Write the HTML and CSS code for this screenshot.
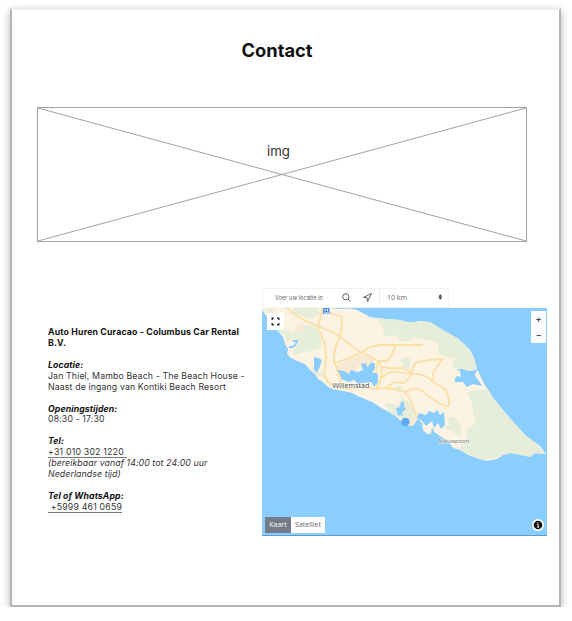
FILE: index.html
```html
<!DOCTYPE html>
<html lang="nl">
<head>
<meta charset="utf-8">
<title>Contact</title>
<link rel="stylesheet" href="styles.css">
</head>
<body>
<main class="page">
  <h1 class="title">Contact</h1>
  <div class="placeholder">
    <svg class="cross" viewBox="0 0 490 135" preserveAspectRatio="none"><path d="M0 0L490 135M490 0L0 135"/></svg>
    <span class="placeholder-label">img</span>
  </div>
  <div class="columns">
    <address class="details">
      <p class="company">Auto Huren Curacao - Columbus Car Rental<br>B.V.</p>
      <p><strong>Locatie:</strong><br>Jan Thiel, Mambo Beach - The Beach House -<br>Naast de ingang van Kontiki Beach Resort</p>
      <p><strong>Openingstijden:</strong><br>08:30 - 17:30</p>
      <p><strong>Tel:</strong><br><span class="phone">+31 010 302 1220&nbsp;</span><br><em>(bereikbaar vanaf 14:00 tot 24:00 uur<br>Nederlandse tijd)</em></p>
      <p><strong>Tel of WhatsApp:</strong><br><span class="phone">&nbsp;+5999 461 0659</span></p>
    </address>
    <section class="locator">
      <div class="search">
        <span class="query">Voer uw locatie in</span>
        <svg class="icon" viewBox="0 0 10 10"><circle cx="4.2" cy="4.2" r="3.5"/><path d="M6.7 6.7L9.6 9.6"/></svg>
        <svg class="icon locate" viewBox="0 0 10 10"><path d="M9.4.6L.6 4.8L4.6 5.4L5.2 9.4Z"/></svg>
        <div class="radius"><span>10 km</span><svg class="sort" viewBox="0 0 5 6"><path d="M.4 2.6L2.5 0L4.6 2.6ZM.4 3.4H4.6L2.5 6Z"/></svg></div>
      </div>
      <div class="map">
        <svg class="terrain" viewBox="262 308 285 228">
          <path class="land" d="M262 308V310L267 317L272 328L278 331L283 337L285 344L288 349L287 354L291 358L297 361L305 364L310 370L315 374L318 379L323 382L328 387L333 389L343 391L352 393L360 397L372 402L383 409L393 414L400 420L409 426L414 425L417 418L422 423L423 430L427 434L431 434L432 427L434 432L440 436L447 440L453 448L460 450L468 455L477 458L487 461L497 459L503 455L510 453L522 454L530 457L535 453L546 454L540 446L533 441L525 435L515 424L503 410L494 399L483 382L477 369L474 358L470 350L463 343L457 338L443 330L430 322L420 321L413 322L407 322L400 320L387 319L377 318L370 317L357 310L350 308.5L338 309L332 308Z"/>
          <g class="green">
            <path d="M376 318L387 319L400 320L407 322L430 322L443 330L457 338L470 350L474 358L477 369L468 372L458 370L452 366L455 358L449 358L438 353L438 343L427 340L413 337L410 341L400 341L395 335L383 337L384 328Z"/>
            <path d="M467 392L478 390L487 390L494 399L503 410L515 424L525 435L533 441L546 454L535 453L530 457L510 453L503 455L487 461L477 458L460 450L461 446L465 440L467 430L476 423L473 413L472 402Z"/>
            <path d="M293 308H318L320 315L312 319L301 316L294 313ZM284 328L294 333L298 326L311 325L318 329L323 345L316 350L305 352L295 355L292 352L300 342L293 339L286 342Z"/>
            <path d="M266 309L274 309L283 322L285 336L278 331Z"/>
            <path d="M309 367L316 374L323 378L323 370L320 374L316 368Z"/>
            <path d="M401 360L407 356L411 360L410 370L403 367ZM396 386L401 385L403 391L397 393ZM385 404L391 403L398 406L402 398L409 402L414 411L415 418L408 421L397 417L390 413ZM446 418L455 417L461 427L460 437L453 432L444 428L450 424Z"/>
          </g>
          <path class="sand" d="M338 363L352 356L364 354L374 360L372 366L358 366L352 376L341 370L336 371ZM295 329L301 323L305 326L301 333L296 332ZM409 419L414 416L418 419L412 426L408 424Z"/>
          <g class="streets"><path d="M330 352L351 345L379 352M343 335L355 342L369 338M344 322L352 318M407 350L419 342L430 350M382 354L401 376L435 385M430 399L443 408L456 411L469 414M337 374L343 385M391 382L396 376L417 380M384 393L395 398L405 396M417 392L427 402M395 355L400 349L412 352"/></g>
          <g class="roads">
            <path d="M287 308Q291 312 297 316Q308 323 322 328Q332 331 340 337L360 352Q369 355 378 361"/>
            <path d="M323 308L321 315L318 327L325 344Q327 360 324 374Q326 382 333 386Q345 391 361 387L375 389Q388 386 405 392"/>
            <path d="M328 312L342 317Q342 329 339 339Q333 350 334 362Q339 371 340 382L347 388"/>
            <path d="M335 363Q343 360 351 357L362 352L370 347L380 345H422M395 346Q392 357 387 361H378L380 364Q385 377 376 388M378 361L376 372L374 380"/>
            <path d="M382 367Q393 369 403 368L412 373Q413 363 418 362Q431 359 443 359Q436 367 433 373V382M383 377Q389 371 397 372Q405 374 412 373Q408 381 403 383Q393 381 390 385Q386 387 388 390M412 374Q425 373 433 382Q448 389 448 396Q451 408 446 406Q432 401 423 391Q414 386 405 392L409 397L412 405L417 417"/>
          </g>
          <path class="water" d="M314 357L318 358L322 360L320 366L317 373L314 369ZM337 370L344 371L349 374L351 370L358 372L363 370L361 364L366 363L367 367L372 362L375 364L375 369L372 372L378 374V382L374 387L371 382L363 383L358 384L354 380L349 382L341 379L340 374ZM455 378L457 376L461 377L460 371L456 370L462 369L468 371L472 371L477 369L475 376L479 381L482 386L473 384L467 387L463 382L455 382ZM396 408L400 407L401 402L404 402L404 407L406 409L402 412L403 416L400 415L398 416ZM417 418L419 413L426 415L429 411L434 413L437 410L440 415L444 412L445 425L441 429L438 423L434 428L432 421L426 426L422 421Z"/>
          <path class="inlet" d="M289 347Q296 348 297 341L293 341"/>
          <path class="shore" d="M475 374L478 371L481 378L485 386L479 381Z"/>
          <circle class="pin" cx="405.4" cy="422" r="4.2"/>
          <path class="transit" d="M323 308H329.5V314H323Z"/><path class="transit-mark" d="M325 309V311M327.5 309V311M324 313H329"/>
          <text class="city" x="332.5" y="387.5" textLength="37">Willemstad</text>
          <text class="town" x="438.5" y="443" textLength="31" lengthAdjust="spacingAndGlyphs">Nieuwpoort</text>
        </svg>
        <div class="expand"><svg viewBox="0 0 9 9"><path d="M.5.5H3V1.4L1.4 3H.5ZM6 .5H8.5V3H7.6L6 1.4ZM.5 6H1.4L3 7.6V8.5H.5ZM7.6 6H8.5V8.5H6V7.6Z"/></svg></div>
        <div class="zoom"><span>+</span><span>−</span></div>
        <div class="layers"><span class="active">Kaart</span><span class="layer">Satelliet</span></div>
        <div class="info"><svg viewBox="0 0 10 10"><circle cx="5" cy="5" r="4.3"/><path d="M4 4.3H5.2V7.2H6.2M4 7.2H5.2M4.6 2.7H5.6"/></svg></div>
      </div>
    </section>
  </div>
</main>
</body>
</html>
```
FILE: styles.css
```css
* { box-sizing: border-box; }
body { margin: 0; background: #fff; font-family: Inter, "Liberation Sans", sans-serif; color: #111; }
.page {
  width: 551px; height: 599px; margin: 8px 0 0 10px; padding: 27px 14px 0 25px;
  background: #fff; border: 2px solid #b5b5b5; border-top-color: #ededed;
  box-shadow: 0 3px 8px rgba(0,0,0,.3);
}
.title { margin: 0 0 0 -5px; width: 490px; text-align: center; font-size: 18.3px; line-height: 26px; font-weight: 700; }
.placeholder { width: 490px; height: 135px; margin-top: 44px; border: 1px solid #a2a2a2; position: relative; text-align: center; padding: 32px 7px 0 0; }
.cross { position: absolute; inset: 0; width: 100%; height: 100%; fill: none; stroke: #888; stroke-width: .8; }
.placeholder-label { position: relative; font-size: 13.3px; line-height: 18px; color: #333; }
.columns { display: flex; margin-top: 46px; }
.details { width: 214px; flex: none; padding: 39px 0 0 11px; font-size: 8.75px; letter-spacing: .13px; line-height: 10.93px; font-style: normal; white-space: nowrap; color: #333; }
.details p { margin: 0 0 10.93px; }
.details .company { font-weight: 700; color: #111; letter-spacing: .16px; }
.details strong { font-style: italic; color: #111; letter-spacing: .08px; }
.details em { letter-spacing: .09px; }
.phone { letter-spacing: .2px; border-bottom: 1px solid #777; }
.locator { width: 285px; margin-left: 11px; flex: none; }
.search { width: 187px; height: 20px; display: flex; align-items: center; border: 1px solid #f3f3f3; padding: 0 0 2px 12px; color: #666; font-size: 5.7px; }
.query { width: 67px; white-space: nowrap; }
.icon { width: 9px; height: 9px; fill: none; stroke: #555; stroke-width: 1; }
.locate { margin-left: 12px; }
.radius { height: 18px; margin-left: 7px; padding: 0 6px 0 7px; flex: 1; border-left: 1px solid #eee; display: flex; align-items: center; justify-content: space-between; font: 7px "Open Sans", sans-serif; }
.sort { width: 4.5px; height: 6px; fill: #333; }
.map { width: 285px; height: 228px; position: relative; background: #89ceff; border-bottom: 1px solid #5e9bc9; overflow: hidden; }
.terrain { display: block; width: 285px; height: 228px; }
.land, .shore { fill: #fcf3e3; }
.green { fill: #e6eeda; }
.sand { fill: #f8e9d4; }
.water { fill: #89ceff; }
.inlet { fill: none; stroke: #89ceff; stroke-width: 2; }
.roads { fill: none; stroke: #fcdfa5; stroke-width: 1.8; stroke-linejoin: round; stroke-linecap: round; }
.streets { fill: none; stroke: #f1ece5; stroke-width: .6; }
.pin { fill: #5ba8f3; }
.transit { fill: #4c8ff0; }
.transit-mark { stroke: #fff; }
.city, .town { font-family: "Open Sans", sans-serif; fill: #444; stroke: #fff; stroke-width: .8; paint-order: stroke; }
.city { font-size: 7.2px; }
.town { font-size: 6px; fill: #666; }
.expand, .zoom, .layers, .info { position: absolute; background: #fff; }
.expand { left: 5px; top: 5px; width: 17px; height: 17px; padding: 4px; }
.expand svg { display: block; width: 9px; height: 9px; fill: #333; }
.zoom { right: 1px; top: 3px; width: 15px; height: 32px; display: grid; grid-template-rows: 1fr 1fr; place-items: center; background: #fafcff; font: 700 9px "Open Sans", sans-serif; color: #444; }
.layers { left: 3px; bottom: 2px; width: 60px; height: 16px; display: flex; font: 7px/16px "Open Sans", sans-serif; color: #666; text-align: center; }
.active { width: 26px; background: #737c86; color: #fff; }
.layer { flex: 1; }
.info { right: 3px; bottom: 4px; width: 12px; height: 12px; border-radius: 50%; padding: 1px; }
.info svg { display: block; width: 10px; height: 10px; fill: #111; }
.info path { fill: none; stroke: #fff; stroke-width: .9; }
```
